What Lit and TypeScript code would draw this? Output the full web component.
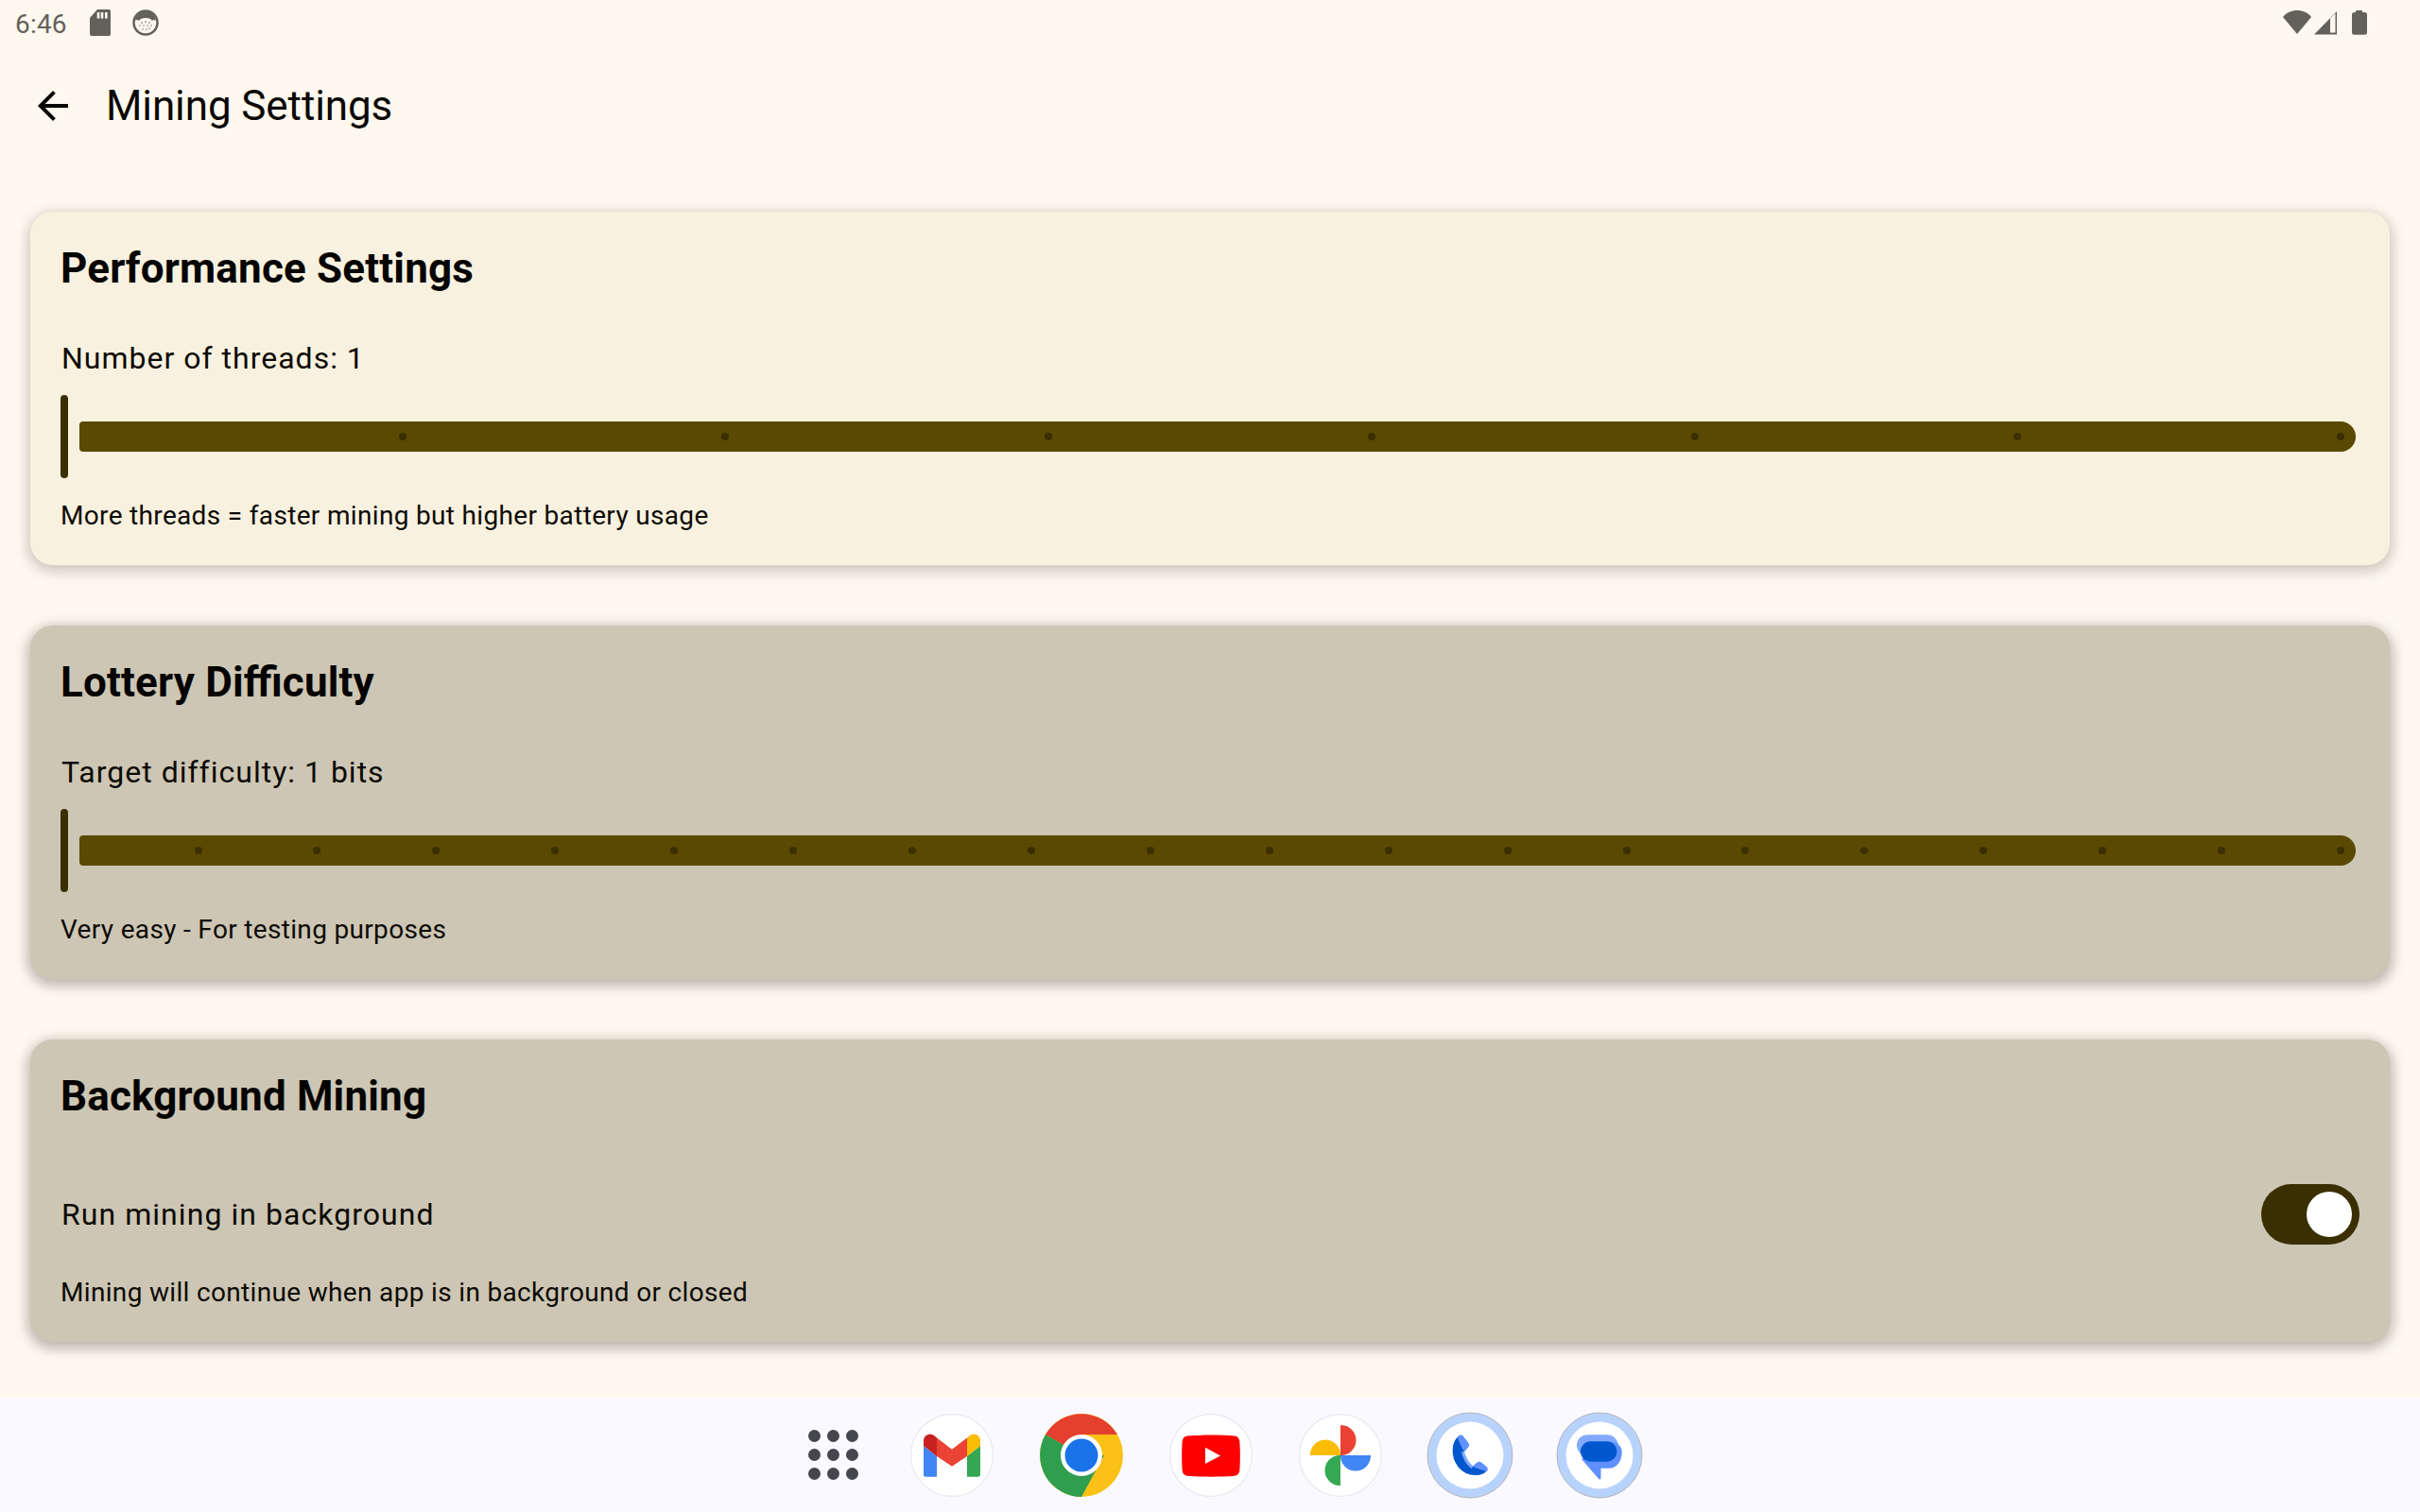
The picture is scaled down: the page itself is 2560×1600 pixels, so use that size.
import { LitElement, html, css } from "lit";
import { customElement } from "lit/decorators.js";

const ticks = (first: number, last: number, n: number, left: number, width: number) =>
  Array.from({ length: n }, (_, i) => ((first + (i * (last - first)) / (n - 1) - left) / width) * 100);

@customElement("app-root")
export class AppRoot extends LitElement {
  static styles = css`
    :host { display: block; width: 2560px; height: 1600px; background: #fff8ee; font-family: Roboto, sans-serif; color: #0c0a04; overflow: hidden; }
    .page { display: flex; flex-direction: column; height: 1600px; }
    .status { height: 48px; display: flex; align-items: center; padding: 0 54px 0 16px; color: #63615a; font-size: 28px; }
    .status .time { width: 56px; letter-spacing: 0.2px; margin-top: 2px; }
    .status svg { display: block; }
    .status .left { display: flex; align-items: center; gap: 22px; flex: 1; }
    .status .right { display: flex; align-items: center; gap: 1px; }
    .status .batt { margin-left: 12px; }
    .topbar { height: 128px; display: flex; align-items: center; padding-left: 32px; font-size: 44px; letter-spacing: -0.1px; color: #0a0804; }
    .topbar svg { width: 48px; height: 48px; margin-right: 32px; }
    .content { display: flex; flex-direction: column; gap: 64px; padding: 48px 32px 0; flex: 1; }
    .card { border-radius: 24px; padding: 32px; box-shadow: 0 4px 14px 3px rgba(0,0,0,.2); }
    .light { background: #f9f1df; }
    .dark { background: #cdc6b4; box-shadow: 0 4px 14px 3px rgba(0,0,0,.28); }
    h2 { margin: 0; font-size: 44px; line-height: 56px; font-weight: 700; letter-spacing: 0.17px; color: #050402; font-feature-settings: "liga" 1; }
    .label { margin-top: 43px; padding-left: 1px; font-size: 32px; line-height: 48px; letter-spacing: 1px; }
    .slider { margin-top: 15px; height: 88px; display: flex; align-items: center; gap: 12px; padding-right: 4px; }
    .thumb { width: 8px; height: 88px; border-radius: 4px; background: #3a2f00; }
    .track { flex: 1; height: 32px; background: #5a4900; border-radius: 4px 16px 16px 4px; position: relative; }
    .tick { position: absolute; top: 12px; width: 8px; height: 8px; margin-left: -4px; border-radius: 50%; background: #3a2f00; }
    .hint { margin-top: 20px; font-size: 28px; line-height: 40px; letter-spacing: 0.33px; }
    .row { margin-top: 49px; height: 96px; display: flex; align-items: center; justify-content: space-between; font-size: 32px; letter-spacing: 1.05px; padding-left: 1px; }
    .row + .hint { margin-top: 15px; }
    .toggle { width: 104px; height: 64px; border-radius: 32px; background: #3a2f00; display: flex; align-items: center; justify-content: flex-end; padding-right: 8px; box-sizing: border-box; }
    .toggle i { display: block; width: 48px; height: 48px; border-radius: 50%; background: #fff; }
    .dock { height: 121px; background: #faf9ff; display: flex; align-items: center; justify-content: center; gap: 49px; }
    .apps { width: 114px; margin-right: -25px; display: grid; grid-template-columns: repeat(3, 13px); gap: 7px; justify-content: center; }
    .apps i { display: block; width: 13px; height: 13px; border-radius: 50%; background: #46464f; }
    .ico { width: 88px; height: 88px; display: block; flex: none; }
    .ring { width: 92px; height: 92px; margin: 0 -2px; }
  `;

  private gmail() {
    return html`<svg class="ico" viewBox="0 0 88 88">
      <circle cx="44" cy="44" r="43.400" fill="#fff" stroke="#e8e8ef" stroke-width="1.200"/>
      <path d="M14 34 28 45V66.700H16.500A2.500 2.500 0 0 1 14 64.200Z" fill="#4285f4"/>
      <path d="M74 34 60 45V66.700H71.500A2.500 2.500 0 0 0 74 64.200Z" fill="#34a853"/>
      <path d="M14 34V28.500C14 22 21 20 25 23L28 25.500V45Z" fill="#c5221f"/>
      <path d="M74 34V28.500C74 22 67 20 63 23L60 25.500V45Z" fill="#fbbc04"/>
      <path d="M28 25.500 44 37.700 60 25.500V45L44 55.700 28 45Z" fill="#ea4335"/>
    </svg>`;
  }
  private chrome() {
    return html`<svg class="ico" viewBox="0 0 88 88">
      <circle cx="44" cy="44" r="44" fill="#fcc117"/>
      <path d="M44 44 6 22A44 44 0 0 1 82 22H44Z" fill="#e53f2f"/>
      <path d="M44 44 6 22A44 44 0 0 0 44 88L68 44Z" fill="#2f9e4f"/>
      <circle cx="44" cy="44" r="22" fill="#fff"/>
      <circle cx="44" cy="44" r="17.500" fill="#1a73e8"/>
    </svg>`;
  }
  private youtube() {
    return html`<svg class="ico" viewBox="0 0 88 88">
      <circle cx="44" cy="44" r="43.400" fill="#fff" stroke="#e8e8ef" stroke-width="1.200"/>
      <path d="M19 23.500C34 22.200 54 22.200 69 23.500C72 23.800 74 26 74.300 29C75 38 75 51 74.300 60C74 63 72 65.500 69 65.800C54 67 34 67 19 65.800C16 65.500 14 63 13.700 60C13 51 13 38 13.700 29C14 26 16 23.800 19 23.500Z" fill="#f00"/>
      <path d="M38 35.700 54 44.400 38 53Z" fill="#fff"/>
    </svg>`;
  }
  private photos() {
    return html`<svg class="ico" viewBox="0 0 88 88">
      <circle cx="44" cy="44" r="43.400" fill="#fff" stroke="#e8e8ef" stroke-width="1.200"/>
      <path d="M44 44V12.500a1 1 0 0 1 1-.5A16 16 0 0 1 44 44Z" fill="#ea4335"/>
      <path d="M44 44H12.500a.5.500 0 0 1-.5-1A16 16 0 0 1 44 44Z" fill="#fbbc04"/>
      <path d="M44 44v31.500a.5.500 0 0 1-1 .5A16 16 0 0 1 44 44Z" fill="#34a853"/>
      <path d="M44 44h31.500a.5.500 0 0 1 .5 1A16 16 0 0 1 44 44Z" fill="#4285f4"/>
    </svg>`;
  }
  private phone() {
    return html`<svg class="ico ring" viewBox="0 0 92 92">
      <circle cx="46" cy="46" r="45" fill="#b8d3fb" stroke="#b5b5b8" stroke-width="1"/>
      <circle cx="46" cy="46" r="35.500" fill="#fff"/>
      <path d="M35 25C29 29 27.500 36 27.700 42C28 55 38 67 51 67C56 67.300 62 66 64.700 61L52 55 49 58C44 55 40 48 39 43L44 36Z" fill="#0057cd"/>
      <path d="M33 27C34.500 24 37.500 24 39 26L44.500 33C45.500 34.500 45.300 36 44.500 37L40 42.500Q35 34 33 27Z" fill="#5e91ff"/>
      <path d="M49 58 53.500 53.500C55 52.500 56.500 52.500 58 53.500L64 58.500C65 60 65 61.500 63.500 63Q56 61 49 58Z" fill="#5e91ff"/>
      <path d="M37 42.500 40 42C41 47 45 54 49.500 57.500L47.500 60C42 56 38.500 49 37 42.500Z" fill="#7fa8ff"/>
    </svg>`;
  }
  private messages() {
    return html`<svg class="ico ring" viewBox="0 0 92 92">
      <circle cx="46" cy="46" r="45" fill="#b8d3fb" stroke="#b5b5b8" stroke-width="1"/>
      <circle cx="46" cy="46" r="35.500" fill="#fff"/>
      <path d="M34 24.300H54C60 24.300 64 28 66 34H37C31 34 27 39 27 45C24 43 22 39 22 35.500C22 29 27 24.300 34 24.300Z" fill="#82a9ff"/>
      <path d="M60 32C66 33 69.700 37 69.700 42.500C69.700 53 64 59.700 56 59.700H47.500V70C47.500 71.500 46 71.800 45 70.800L27 50Z" fill="#5e91ff"/>
      <rect x="26" y="31.300" width="38.400" height="21.400" rx="10.700" fill="#0057cd"/>
    </svg>`;
  }

  private slider(marks: number[]) {
    return html`<div class="slider">
      <div class="thumb"></div>
      <div class="track">
        ${marks.map((m) => html`<span class="tick" style="left:${m}%"></span>`)}
      </div>
    </div>`;
  }

  render() {
    const w = 2408;
    return html`<div class="page">
      <div class="status">
        <div class="left">
          <span class="time">6:46</span>
          <svg width="24" height="28" viewBox="0 0 24 28"><path d="M9 0h12a2 2 0 0 1 2 2v24a2 2 0 0 1-2 2H3a2 2 0 0 1-2-2V9Z" fill="#63615a"/><path d="M8.700 3h2.600v6.500H8.700ZM12.700 3h2.600v6.500h-2.600ZM17 3h2.600v6.500H17Z" fill="#fff8ee"/></svg>
          <svg width="28" height="28" viewBox="0 0 28 28"><circle cx="14" cy="14" r="12.500" fill="#fff8ee" stroke="#63615a" stroke-width="2.500"/><path d="M3 12C4 5 9 2 14 2s10 3 11 10c-1-1-3-1.500-4 0-1-2-3-3-7-3S8 10 7 12c-1-1.500-3-1-4 0Z" fill="#63615a"/><g fill="#63615a"><circle cx="10" cy="14" r=".8"/><circle cx="14" cy="13" r=".8"/><circle cx="18" cy="14" r=".8"/><circle cx="8" cy="17" r=".7"/><circle cx="12" cy="17" r=".7"/><circle cx="16" cy="17" r=".7"/><circle cx="20" cy="17" r=".7"/><circle cx="11" cy="21" r=".7"/><circle cx="15" cy="21" r=".7"/><circle cx="18" cy="20" r=".7"/></g></svg>
        </div>
        <div class="right">
          <svg width="32" height="28" viewBox="0 0 32 28"><path d="M1 8C5 3 10 1 16 1s11 2 15 7L16 26Z" fill="#63615a"/></svg>
          <svg width="26" height="28" viewBox="0 0 26 28"><path d="M1 26.500 25 2v24.500Z" fill="#63615a"/><path d="M18 9.500V24.500H23.500V4Z" fill="#fff8ee"/></svg>
          <svg class="batt" width="20" height="28" viewBox="0 0 20 28"><path d="M7 1h5a1 1 0 0 1 1 1v1h2.500A2.500 2.500 0 0 1 18 5.500V24.200A2.500 2.500 0 0 1 15.500 26.700h-11A2.500 2.500 0 0 1 2 24.200V5.500A2.500 2.500 0 0 1 4.500 3H6V2a1 1 0 0 1 1-1Z" fill="#63615a"/></svg>
        </div>
      </div>
      <div class="topbar">
        <svg viewBox="0 0 48 48"><path d="M40 22H15.660l11.180-11.180L24 8 8 24l16 16 2.820-2.820L15.660 26H40Z" fill="#0a0804"/></svg>
        <span>Mining Settings</span>
      </div>
      <div class="content">
        <section class="card light">
          <h2>Performance Settings</h2>
          <div class="label">Number of threads: 1</div>
          ${this.slider(ticks(425.5, 2476, 7, 84, w))}
          <div class="hint">More threads = faster mining but higher battery usage</div>
        </section>
        <section class="card dark">
          <h2>Lottery Difficulty</h2>
          <div class="label">Target difficulty: 1 bits</div>
          ${this.slider(ticks(209.5, 2476, 19, 84, w))}
          <div class="hint">Very easy - For testing purposes</div>
        </section>
        <section class="card dark">
          <h2>Background Mining</h2>
          <div class="row"><span>Run mining in background</span><div class="toggle"><i></i></div></div>
          <div class="hint">Mining will continue when app is in background or closed</div>
        </section>
      </div>
      <div class="dock">
        <div class="apps">${Array.from({ length: 9 }, () => html`<i></i>`)}</div>
        ${this.gmail()}${this.chrome()}${this.youtube()}${this.photos()}${this.phone()}${this.messages()}
      </div>
    </div>`;
  }
}
